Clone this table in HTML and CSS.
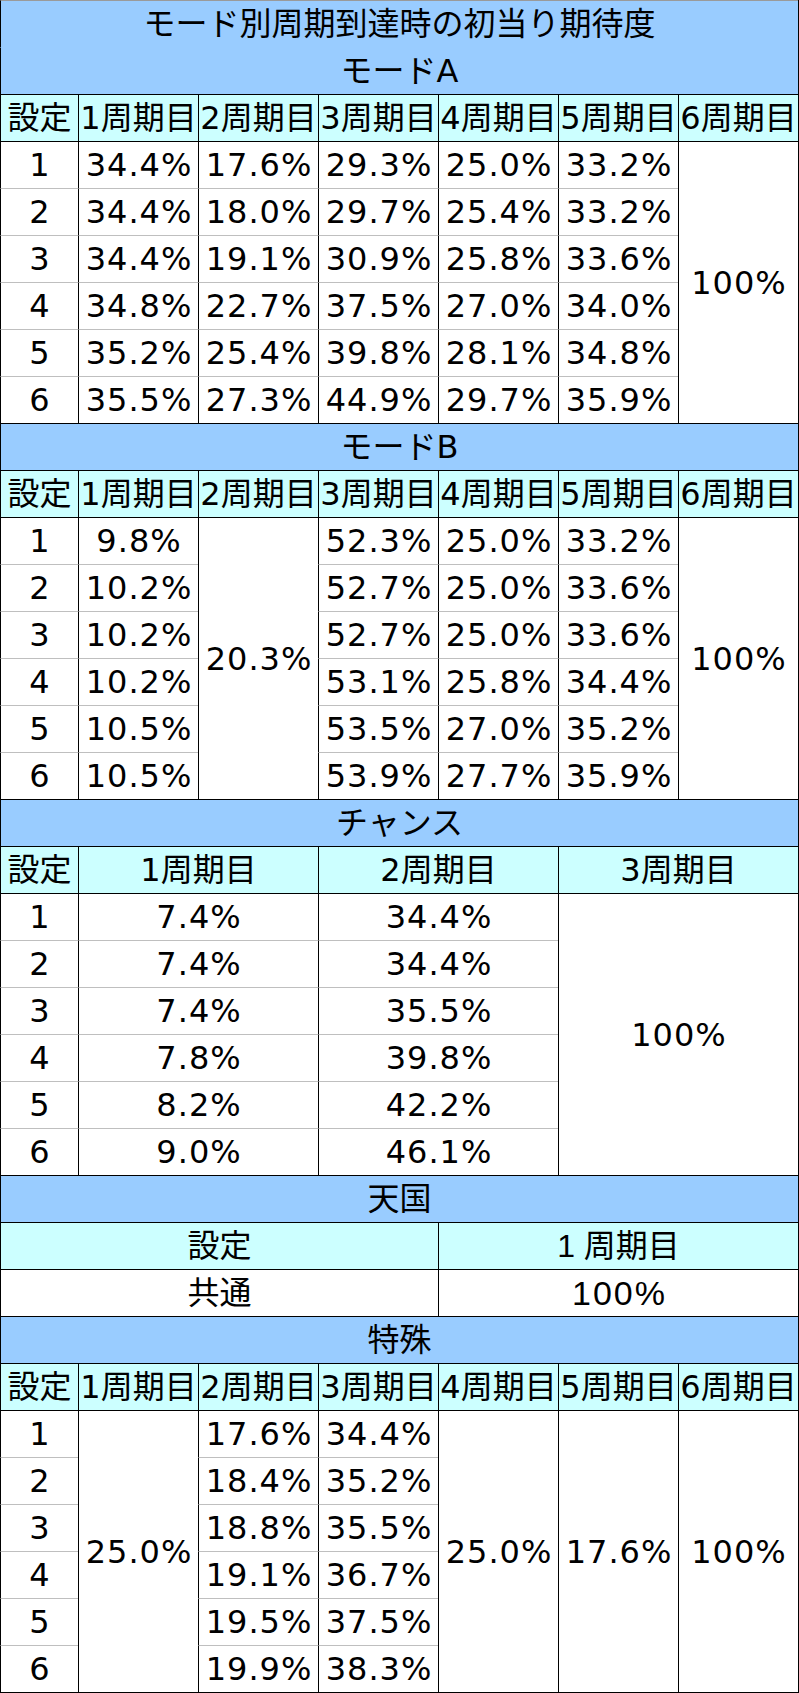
FILE: index.html
```html
<!DOCTYPE html>
<html lang="ja">
<head>
<meta charset="utf-8">
<title>モード別周期到達時の初当り期待度</title>
<link rel="stylesheet" href="styles.css">
</head>
<body>
<div class="sheet">
  <div class="bar top">モード別周期到達時の初当り期待度</div>
  <div class="bar sub">モードA</div>
  <div class="hd">設定</div><div class="hd">1周期目</div><div class="hd">2周期目</div><div class="hd">3周期目</div><div class="hd">4周期目</div><div class="hd">5周期目</div><div class="hd">6周期目</div>

  <div class="c f">1</div><div class="c f num">34.4%</div><div class="c f num">17.6%</div><div class="c f num">29.3%</div><div class="c f num">25.0%</div><div class="c f num">33.2%</div><div class="c f num r6">100%</div>
  <div class="c">2</div><div class="c num">34.4%</div><div class="c num">18.0%</div><div class="c num">29.7%</div><div class="c num">25.4%</div><div class="c num">33.2%</div>
  <div class="c">3</div><div class="c num">34.4%</div><div class="c num">19.1%</div><div class="c num">30.9%</div><div class="c num">25.8%</div><div class="c num">33.6%</div>
  <div class="c">4</div><div class="c num">34.8%</div><div class="c num">22.7%</div><div class="c num">37.5%</div><div class="c num">27.0%</div><div class="c num">34.0%</div>
  <div class="c">5</div><div class="c num">35.2%</div><div class="c num">25.4%</div><div class="c num">39.8%</div><div class="c num">28.1%</div><div class="c num">34.8%</div>
  <div class="c">6</div><div class="c num">35.5%</div><div class="c num">27.3%</div><div class="c num">44.9%</div><div class="c num">29.7%</div><div class="c num">35.9%</div>

  <div class="bar">モードB</div>
  <div class="hd">設定</div><div class="hd">1周期目</div><div class="hd">2周期目</div><div class="hd">3周期目</div><div class="hd">4周期目</div><div class="hd">5周期目</div><div class="hd">6周期目</div>

  <div class="c f">1</div><div class="c f num">9.8%</div><div class="c f num r6">20.3%</div><div class="c f num">52.3%</div><div class="c f num">25.0%</div><div class="c f num">33.2%</div><div class="c f num r6">100%</div>
  <div class="c">2</div><div class="c num">10.2%</div><div class="c num">52.7%</div><div class="c num">25.0%</div><div class="c num">33.6%</div>
  <div class="c">3</div><div class="c num">10.2%</div><div class="c num">52.7%</div><div class="c num">25.0%</div><div class="c num">33.6%</div>
  <div class="c">4</div><div class="c num">10.2%</div><div class="c num">53.1%</div><div class="c num">25.8%</div><div class="c num">34.4%</div>
  <div class="c">5</div><div class="c num">10.5%</div><div class="c num">53.5%</div><div class="c num">27.0%</div><div class="c num">35.2%</div>
  <div class="c">6</div><div class="c num">10.5%</div><div class="c num">53.9%</div><div class="c num">27.7%</div><div class="c num">35.9%</div>

  <div class="bar">チャンス</div>
  <div class="hd">設定</div><div class="hd w2">1周期目</div><div class="hd w2">2周期目</div><div class="hd w2">3周期目</div>

  <div class="c f">1</div><div class="c f num w2">7.4%</div><div class="c f num w2">34.4%</div><div class="c f num w2 r6">100%</div>
  <div class="c">2</div><div class="c num w2">7.4%</div><div class="c num w2">34.4%</div>
  <div class="c">3</div><div class="c num w2">7.4%</div><div class="c num w2">35.5%</div>
  <div class="c">4</div><div class="c num w2">7.8%</div><div class="c num w2">39.8%</div>
  <div class="c">5</div><div class="c num w2">8.2%</div><div class="c num w2">42.2%</div>
  <div class="c">6</div><div class="c num w2">9.0%</div><div class="c num w2">46.1%</div>

  <div class="bar">天国</div>
  <div class="hd alt w4">設定</div><div class="hd alt w3">1 周期目</div>
  <div class="c f alt w4">共通</div><div class="c f alt pct w3">100%</div>

  <div class="bar">特殊</div>
  <div class="hd">設定</div><div class="hd">1周期目</div><div class="hd">2周期目</div><div class="hd">3周期目</div><div class="hd">4周期目</div><div class="hd">5周期目</div><div class="hd">6周期目</div>

  <div class="c f">1</div><div class="c f num r6">25.0%</div><div class="c f num">17.6%</div><div class="c f num">34.4%</div><div class="c f num r6">25.0%</div><div class="c f num r6">17.6%</div><div class="c f num r6">100%</div>
  <div class="c">2</div><div class="c num">18.4%</div><div class="c num">35.2%</div>
  <div class="c">3</div><div class="c num">18.8%</div><div class="c num">35.5%</div>
  <div class="c">4</div><div class="c num">19.1%</div><div class="c num">36.7%</div>
  <div class="c">5</div><div class="c num">19.5%</div><div class="c num">37.5%</div>
  <div class="c">6</div><div class="c num">19.9%</div><div class="c num">38.3%</div>
</div>
</body>
</html>
```

FILE: styles.css
```css
html, body {
  margin: 0;
  padding: 0;
  background: #ffffff;
}

.sheet {
  display: grid;
  grid-template-columns: 78px repeat(6, 120px);
  grid-auto-rows: 47px;
  width: 798px;
  border-right: 1px solid #000;
  border-bottom: 1px solid #000;
  font-family: "DejaVu Sans", "Noto Sans CJK JP", sans-serif;
  font-size: 32px;
  color: #000;
}

.bar, .hd, .c {
  box-sizing: border-box;
  display: flex;
  align-items: center;
  justify-content: center;
  white-space: nowrap;
  border-left: 1px solid #000;
  border-top: 1px solid #000;
  line-height: 1;
}

.bar {
  grid-column: 1 / -1;
  background: #99ccff;
}

.bar.top {
  border-top-color: #9a9a9a;
}

.bar.sub {
  border-top-color: #99ccff;
}

.hd {
  background: #ccffff;
}

.c {
  background: #ffffff;
  border-top-color: #bfbfbf;
}

.c.f {
  border-top-color: #000;
}

.num {
  letter-spacing: 1px;
  padding-left: 1px;
}

.r6 {
  grid-row: span 6;
}

.w2 {
  grid-column: span 2;
}

.w3 {
  grid-column: span 3;
}

.w4 {
  grid-column: span 4;
}

.alt {
  font-family: "Liberation Sans", "Noto Sans CJK JP", sans-serif;
}

.alt.pct {
  font-size: 34px;
  letter-spacing: 2px;
  padding-left: 2px;
}
```
